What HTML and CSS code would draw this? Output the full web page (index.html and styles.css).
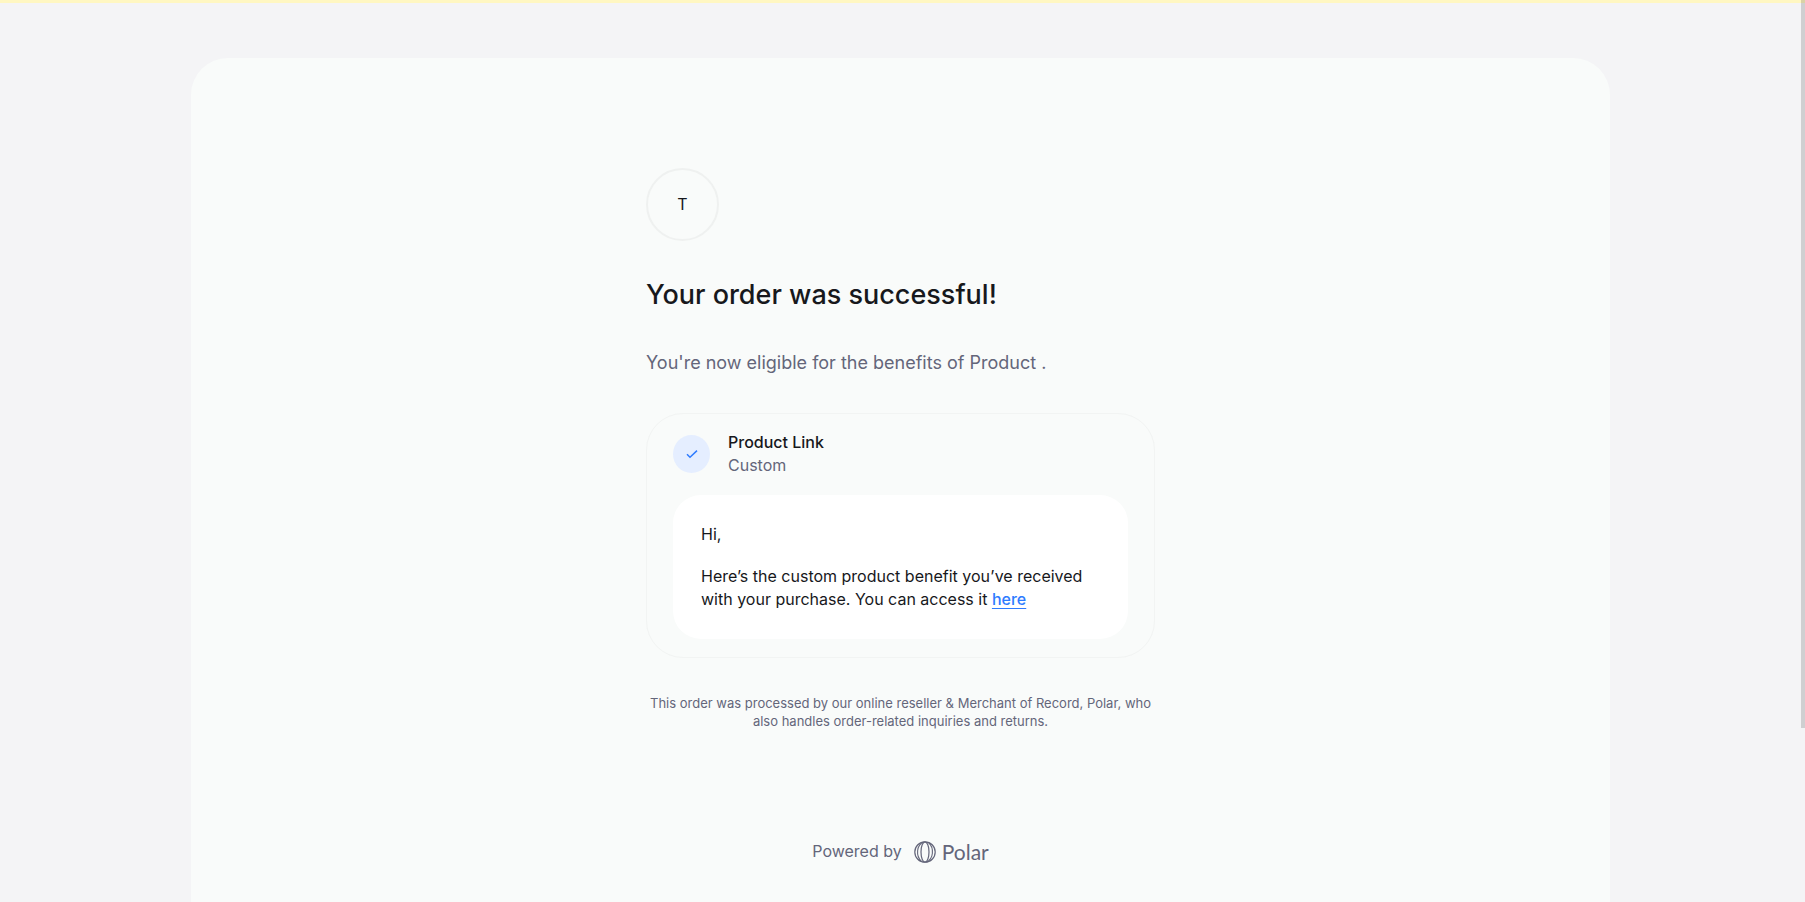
FILE: index.html
```html
<!DOCTYPE html>
<html lang="en">
<head>
<meta charset="utf-8">
<meta name="viewport" content="width=device-width, initial-scale=1">
<title>Order confirmation</title>
<link rel="stylesheet" href="styles.css">
</head>
<body>
<div class="scroll-thumb"></div>
<main class="page">
  <section class="panel">
    <div class="content">
      <div class="avatar">T</div>
      <h1 class="title">Your order was successful!</h1>
      <p class="lead">You're now eligible for the benefits of Product .</p>
      <article class="benefit">
        <header class="benefit-head">
          <span class="check">
            <svg width="14" height="14" viewBox="0 0 14 14" fill="none" stroke="currentColor" stroke-width="1.5" aria-hidden="true"><path d="M2 7.3 5 10.2 12 3.6"/></svg>
          </span>
          <div>
            <h2 class="benefit-name">Product Link</h2>
            <p class="benefit-type">Custom</p>
          </div>
        </header>
        <div class="note">
          <p>Hi,</p>
          <p>Here’s the custom product benefit you’ve received with your purchase. You can access it <a class="link" href="#">here</a></p>
        </div>
      </article>
      <p class="legal">This order was processed by our online reseller &amp; Merchant of Record, Polar, who also handles order-related inquiries and returns.</p>
    </div>
    <footer class="powered">
      <span>Powered by</span>
      <a class="brand" href="#">
        <svg width="22" height="22" viewBox="0 0 22 22" fill="none" stroke="currentColor" stroke-width="1.2" aria-hidden="true">
          <circle cx="11" cy="11" r="10.2"/>
          <ellipse cx="11" cy="11" rx="4" ry="10.2"/>
          <path stroke-width="1.1" d="M9.500 1C2.500 4 1.500 15 7.500 20.500M12.500 21C19.500 18 20.500 7 14.500 1.500"/>
        </svg>
        <span class="wordmark">Polar</span>
      </a>
    </footer>
  </section>
</main>
</body>
</html>
```
FILE: styles.css
```css
* { box-sizing: border-box; }
body {
  margin: 0;
  background: #f4f4f6;
  color: #17181c;
  font-family: Inter, "Liberation Sans", sans-serif;
  font-size: 16px;
  line-height: 23px;
}
h1, h2, p { margin: 0; }
.page {
  height: 100vh;
  overflow: hidden;
  border-top: 3px solid #fff7c2;
  padding: 55px 195px 0 191px;
}
.scroll-thumb {
  position: absolute;
  top: 0;
  right: 0;
  width: 4px;
  height: 728px;
  background: rgba(0, 0, 0, 0.15);
}
.panel {
  min-height: 100%;
  padding: 110px 32px 32px;
  border-radius: 37px 37px 0 0;
  background: #f9fbfa;
  display: flex;
  flex-direction: column;
  align-items: center;
}
.content {
  width: 100%;
  max-width: 509px;
  display: flex;
  flex-direction: column;
}
.avatar {
  width: 73px;
  height: 73px;
  border: 2px solid #eff1f0;
  border-radius: 50%;
  display: grid;
  place-items: center;
}
.title {
  margin-top: 36px;
  font-size: 27px;
  line-height: 36px;
  font-weight: 500;
}
.lead {
  margin-top: 34px;
  font-size: 18px;
  line-height: 32px;
  color: #64667a;
}
.benefit {
  margin-top: 34px;
  padding: 17px 26px 18px;
  border: 1px solid #f2f4f3;
  border-radius: 37px;
}
.benefit-head {
  display: flex;
  align-items: center;
  gap: 18px;
}
.check {
  width: 37px;
  height: 38px;
  border-radius: 50%;
  background: #e5eeff;
  color: #2e7bff;
  display: grid;
  place-items: center;
}
.benefit-name {
  font-size: 16px;
  font-weight: 500;
}
.benefit-type { color: #64667a; }
.note {
  margin-top: 18px;
  padding: 28px;
  border-radius: 28px;
  background: #fff;
  display: grid;
  gap: 19px;
}
.link {
  color: #2e7bff;
  font-weight: 500;
  text-underline-offset: 3px;
}
.legal {
  margin-top: 36px;
  font-size: 13px;
  line-height: 18px;
  text-align: center;
  color: #64667a;
}
.powered {
  margin-top: 110px;
  display: flex;
  align-items: center;
  gap: 12px;
  color: #64667a;
}
.brand {
  display: flex;
  align-items: center;
  gap: 6px;
  color: inherit;
  text-decoration: none;
}
.wordmark {
  font-family: Lato, sans-serif;
  font-size: 21px;
}
```
